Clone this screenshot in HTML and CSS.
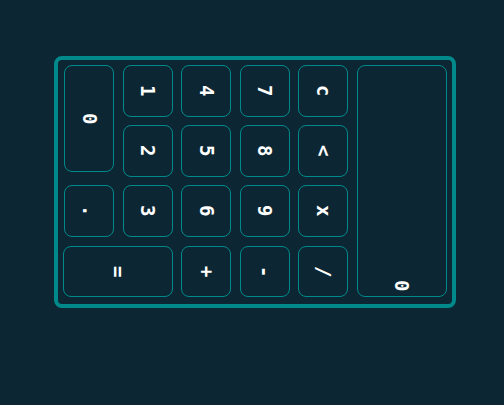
FILE: index.html
```html
<!DOCTYPE html>
<html>
<head>
<meta charset="utf-8">
<link rel="stylesheet" href="styles.css">
</head>
<body>
<div class="calc">
  <button class="key zero"><span>0</span></button>
  <button class="key"><span>1</span></button>
  <button class="key"><span>4</span></button>
  <button class="key"><span>7</span></button>
  <button class="key"><span>c</span></button>
  <div class="display"><span>0</span></div>
  <button class="key"><span>2</span></button>
  <button class="key"><span>5</span></button>
  <button class="key"><span>8</span></button>
  <button class="key"><span>&lt;</span></button>
  <button class="key"><span>.</span></button>
  <button class="key"><span>3</span></button>
  <button class="key"><span>6</span></button>
  <button class="key"><span>9</span></button>
  <button class="key"><span>x</span></button>
  <button class="key equals"><span>=</span></button>
  <button class="key"><span>+</span></button>
  <button class="key"><span>-</span></button>
  <button class="key"><span>/</span></button>
</div>
</body>
</html>
```
FILE: styles.css
```css
html, body {
  margin: 0;
  padding: 0;
  background: #0c2733;
  width: 504px;
  height: 405px;
  overflow: hidden;
}
body {
  padding: 56px 0 0 54px;
  box-sizing: border-box;
  font-family: "DejaVu Sans Mono", monospace;
}
.calc {
  box-sizing: border-box;
  width: 402px;
  height: 252px;
  border: 4px solid #00898a;
  border-radius: 8px;
  padding: 5px 5px 6px 6px;
  display: grid;
  grid-template-columns: repeat(5, 50px) 90px;
  grid-template-rows: repeat(4, 51.5px);
  column-gap: 8.5px;
  row-gap: 8.7px;
}
.key {
  box-sizing: border-box;
  margin: 0;
  padding: 0;
  background: transparent;
  border: 1px solid #00898a;
  border-radius: 8px;
  color: #ffffff;
  font-family: "DejaVu Sans Mono", monospace;
  font-weight: 600;
  font-size: 19px;
  display: flex;
  align-items: center;
  justify-content: center;
}
.key span, .display span {
  writing-mode: vertical-rl;
  line-height: 1;
}
.zero {
  grid-row: 1 / span 2;
  height: 107px;
}
.equals {
  grid-column: 1 / span 2;
  margin-left: -1px;
}
.display {
  grid-column: 6;
  grid-row: 1 / span 4;
  box-sizing: border-box;
  border: 1px solid #00898a;
  border-radius: 8px;
  color: #ffffff;
  font-weight: 600;
  font-size: 19px;
  display: flex;
  flex-direction: column;
  align-items: center;
  justify-content: flex-end;
  padding-bottom: 5px;
}
```
